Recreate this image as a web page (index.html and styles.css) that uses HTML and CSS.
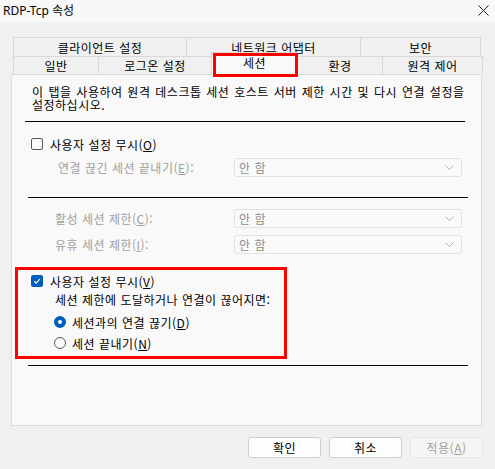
FILE: index.html
```html
<!DOCTYPE html>
<html lang="ko">
<head>
  <meta charset="UTF-8">
  <title>RDP-Tcp 속성</title>
  <link rel="stylesheet" href="styles.css">
</head>
<body>
  <div class="window">
    <div class="titlebar">
      <span class="title">RDP-Tcp 속성</span>
      <svg class="close" width="11" height="11" viewBox="0 0 11 11">
        <path d="M0.5 0.5L10.5 10.5M10.5 0.5L0.5 10.5" stroke="#222" stroke-width="1"/>
      </svg>
    </div>

    <!-- Tabs -->
    <div class="tabs">
      <div class="tab-row back">
        <div class="tab w-client">클라이언트 설정</div>
        <div class="tab w-network">네트워크 어댑터</div>
        <div class="tab w-security">보안</div>
      </div>
      <div class="tab-row front">
        <div class="tab w-general">일반</div>
        <div class="tab w-logon">로그온 설정</div>
        <div class="tab w-session selected">세션</div>
        <div class="tab w-env">환경</div>
        <div class="tab w-remote">원격 제어</div>
      </div>
    </div>

    <!-- Session page -->
    <div class="panel">
      <p class="desc">이 탭을 사용하여 원격 데스크톱 세션 호스트 서버 제한 시간 및 다시 연결 설정을<br>설정하십시오.</p>
      <div class="sep sep-1"></div>

      <div class="check-row top-check">
        <span class="checkbox"></span>
        <span>사용자 설정 무시(<u>O</u>)</span>
      </div>
      <div class="field-row row-end">
        <span class="field-label">연결 끊긴 세션 끝내기(<u>E</u>):</span>
        <div class="select">
          <span>안 함</span>
          <svg width="9" height="5" viewBox="0 0 9 5"><path d="M0.5 0.5L4.5 4.5L8.5 0.5" fill="none" stroke="#b4b4b4"/></svg>
        </div>
      </div>

      <div class="sep sep-2"></div>

      <div class="field-row row-active">
        <span class="field-label wide">활성 세션 제한(<u>C</u>):</span>
        <div class="select">
          <span>안 함</span>
          <svg width="9" height="5" viewBox="0 0 9 5"><path d="M0.5 0.5L4.5 4.5L8.5 0.5" fill="none" stroke="#b4b4b4"/></svg>
        </div>
      </div>
      <div class="field-row row-idle">
        <span class="field-label wide">유휴 세션 제한(<u>I</u>):</span>
        <div class="select">
          <span>안 함</span>
          <svg width="9" height="5" viewBox="0 0 9 5"><path d="M0.5 0.5L4.5 4.5L8.5 0.5" fill="none" stroke="#b4b4b4"/></svg>
        </div>
      </div>

      <div class="highlight">
        <div class="check-row inner-check">
          <span class="checkbox checked">
            <svg width="12" height="12" viewBox="0 0 12 12"><path d="M3.2 6.2L5.2 8.1L8.8 4.2" fill="none" stroke="#fff" stroke-width="1.1"/></svg>
          </span>
          <span>사용자 설정 무시(<u>V</u>)</span>
        </div>
        <div class="note">세션 제한에 도달하거나 연결이 끊어지면:</div>
        <div class="radio-row first">
          <span class="radio checked"></span>
          <span>세션과의 연결 끊기(<u>D</u>)</span>
        </div>
        <div class="radio-row">
          <span class="radio"></span>
          <span>세션 끝내기(<u>N</u>)</span>
        </div>
      </div>

      <div class="sep sep-3"></div>
    </div>

    <div class="buttons">
      <button class="btn">확인</button>
      <button class="btn">취소</button>
      <button class="btn disabled">적용(<u>A</u>)</button>
    </div>
  </div>
</body>
</html>
```

FILE: styles.css
```css
body {
  margin: 0;
  background: #f0f0f0;
  font-family: "Noto Sans CJK KR", "Noto Sans", sans-serif;
  font-size: 12px;
  color: #000;
}

.window {
  width: 495px;
  height: 469px;
  background: #f0f0f0;
  overflow: hidden;
}

.titlebar {
  height: 22px;
  background: #f8f8f8;
  display: flex;
  align-items: center;
  justify-content: space-between;
  padding: 0 6px 2px 3px;
  box-sizing: border-box;
}

.title {
  font-family: "Noto Sans", "Noto Sans CJK KR", sans-serif;
  font-size: 12px;
}

.close {
  display: block;
}

/* Tabs */
.tabs {
  margin: 15px 0 0 13px;
  position: relative;
  z-index: 1;
  letter-spacing: 0.5px;
}

.tab-row {
  display: flex;
}

.tab {
  box-sizing: border-box;
  border: 1px solid #d9d9d9;
  border-bottom: none;
  margin-left: -1px;
  background: #f0f0f0;
  display: flex;
  align-items: center;
  justify-content: center;
  white-space: nowrap;
}

.tab:first-child {
  margin-left: 0;
}

.back .tab {
  height: 19px;
}

.front .tab {
  height: 18px;
}

.w-client { width: 174px; }
.w-network { width: 175px; }
.w-security { width: 121px; }
.w-general { width: 86px; }
.w-logon { width: 114px; }
.w-session { width: 87px; }
.w-env { width: 86px; }
.w-remote { width: 101px; }

.tab.selected {
  height: 23px;
  margin-top: -4px;
  margin-bottom: -1px;
  background: #f9f9f9;
  padding-bottom: 3px;
  position: relative;
}

.tab.selected::after {
  content: "";
  position: absolute;
  left: 1px;
  right: -1px;
  top: 0;
  bottom: -2px;
  border: 3px solid #ff0000;
}

/* Panel */
.panel {
  margin-left: 11px;
  width: 471px;
  height: 352px;
  box-sizing: border-box;
  border: 1px solid #dcdcdc;
  background: #f9f9f9;
  overflow: hidden;
  letter-spacing: 0.5px;
}

.desc {
  margin: 10px 0 0 20px;
  line-height: 13px;
  white-space: nowrap;
  word-spacing: 1px;
}

.sep {
  height: 1px;
  background: #000;
  width: 440px;
}

.sep-1 {
  margin: 10px 0 0 13px;
}

.sep-2 {
  margin: 20px 0 0 16px;
}

.sep-3 {
  margin: 6px 0 0 16px;
}

.check-row,
.radio-row {
  display: flex;
  align-items: center;
  height: 20px;
  white-space: nowrap;
}

.top-check {
  margin: 12px 0 0 19px;
}

.checkbox {
  width: 12px;
  height: 12px;
  box-sizing: border-box;
  border: 1px solid #5a5a5a;
  border-radius: 2px;
  background: #fbfbfb;
  margin-right: 7px;
}

.checkbox.checked {
  border: none;
  background: #005fb8;
}

.checkbox svg {
  display: block;
}

.field-row {
  display: flex;
  align-items: center;
  height: 19px;
  color: #a0a0a0;
  white-space: nowrap;
}

.row-end {
  margin: 4px 0 0 46px;
}

.row-active {
  margin: 11px 0 0 43px;
}

.row-idle {
  margin: 7px 0 0 43px;
}

.field-label {
  width: 176px;
}

.field-label.wide {
  width: 179px;
}

.select {
  width: 228px;
  height: 19px;
  box-sizing: border-box;
  border: 1px solid #e2e2e2;
  border-radius: 3px;
  background: #fafafa;
  display: flex;
  align-items: center;
  justify-content: space-between;
  padding: 0 7px 0 4px;
  color: #8c8c8c;
}

.select svg {
  display: block;
}

/* Annotated group */
.highlight {
  margin: 13px 0 0 3px;
  width: 272px;
  height: 92px;
  box-sizing: border-box;
  border: 3px solid #ff0000;
}

.inner-check {
  margin: 1px 0 0 13px;
}

.note {
  height: 18px;
  line-height: 18px;
  margin-left: 37px;
  white-space: nowrap;
}

.radio-row {
  margin: 1px 0 0 36px;
}

.radio-row.first {
  margin-top: 3px;
}

.radio {
  width: 12px;
  height: 12px;
  box-sizing: border-box;
  border: 1px solid #5a5a5a;
  border-radius: 50%;
  background: #fbfbfb;
  margin-right: 6px;
}

.radio.checked {
  border: 4px solid #005fb8;
  background: #fff;
}

/* Dialog buttons */
.buttons {
  display: flex;
  justify-content: flex-end;
  gap: 8px;
  margin-top: 11px;
  padding-right: 12px;
}

.btn {
  width: 73px;
  height: 21px;
  box-sizing: border-box;
  border: 1px solid #cfcfcf;
  border-radius: 3px;
  background: #fdfdfd;
  font-family: "Noto Sans CJK KR", sans-serif;
  font-size: 12px;
  letter-spacing: 0.5px;
  color: #000;
  padding: 0;
}

.btn.disabled {
  background: #f5f5f5;
  border-color: #e6e6e6;
  color: #a0a0a0;
}
```
